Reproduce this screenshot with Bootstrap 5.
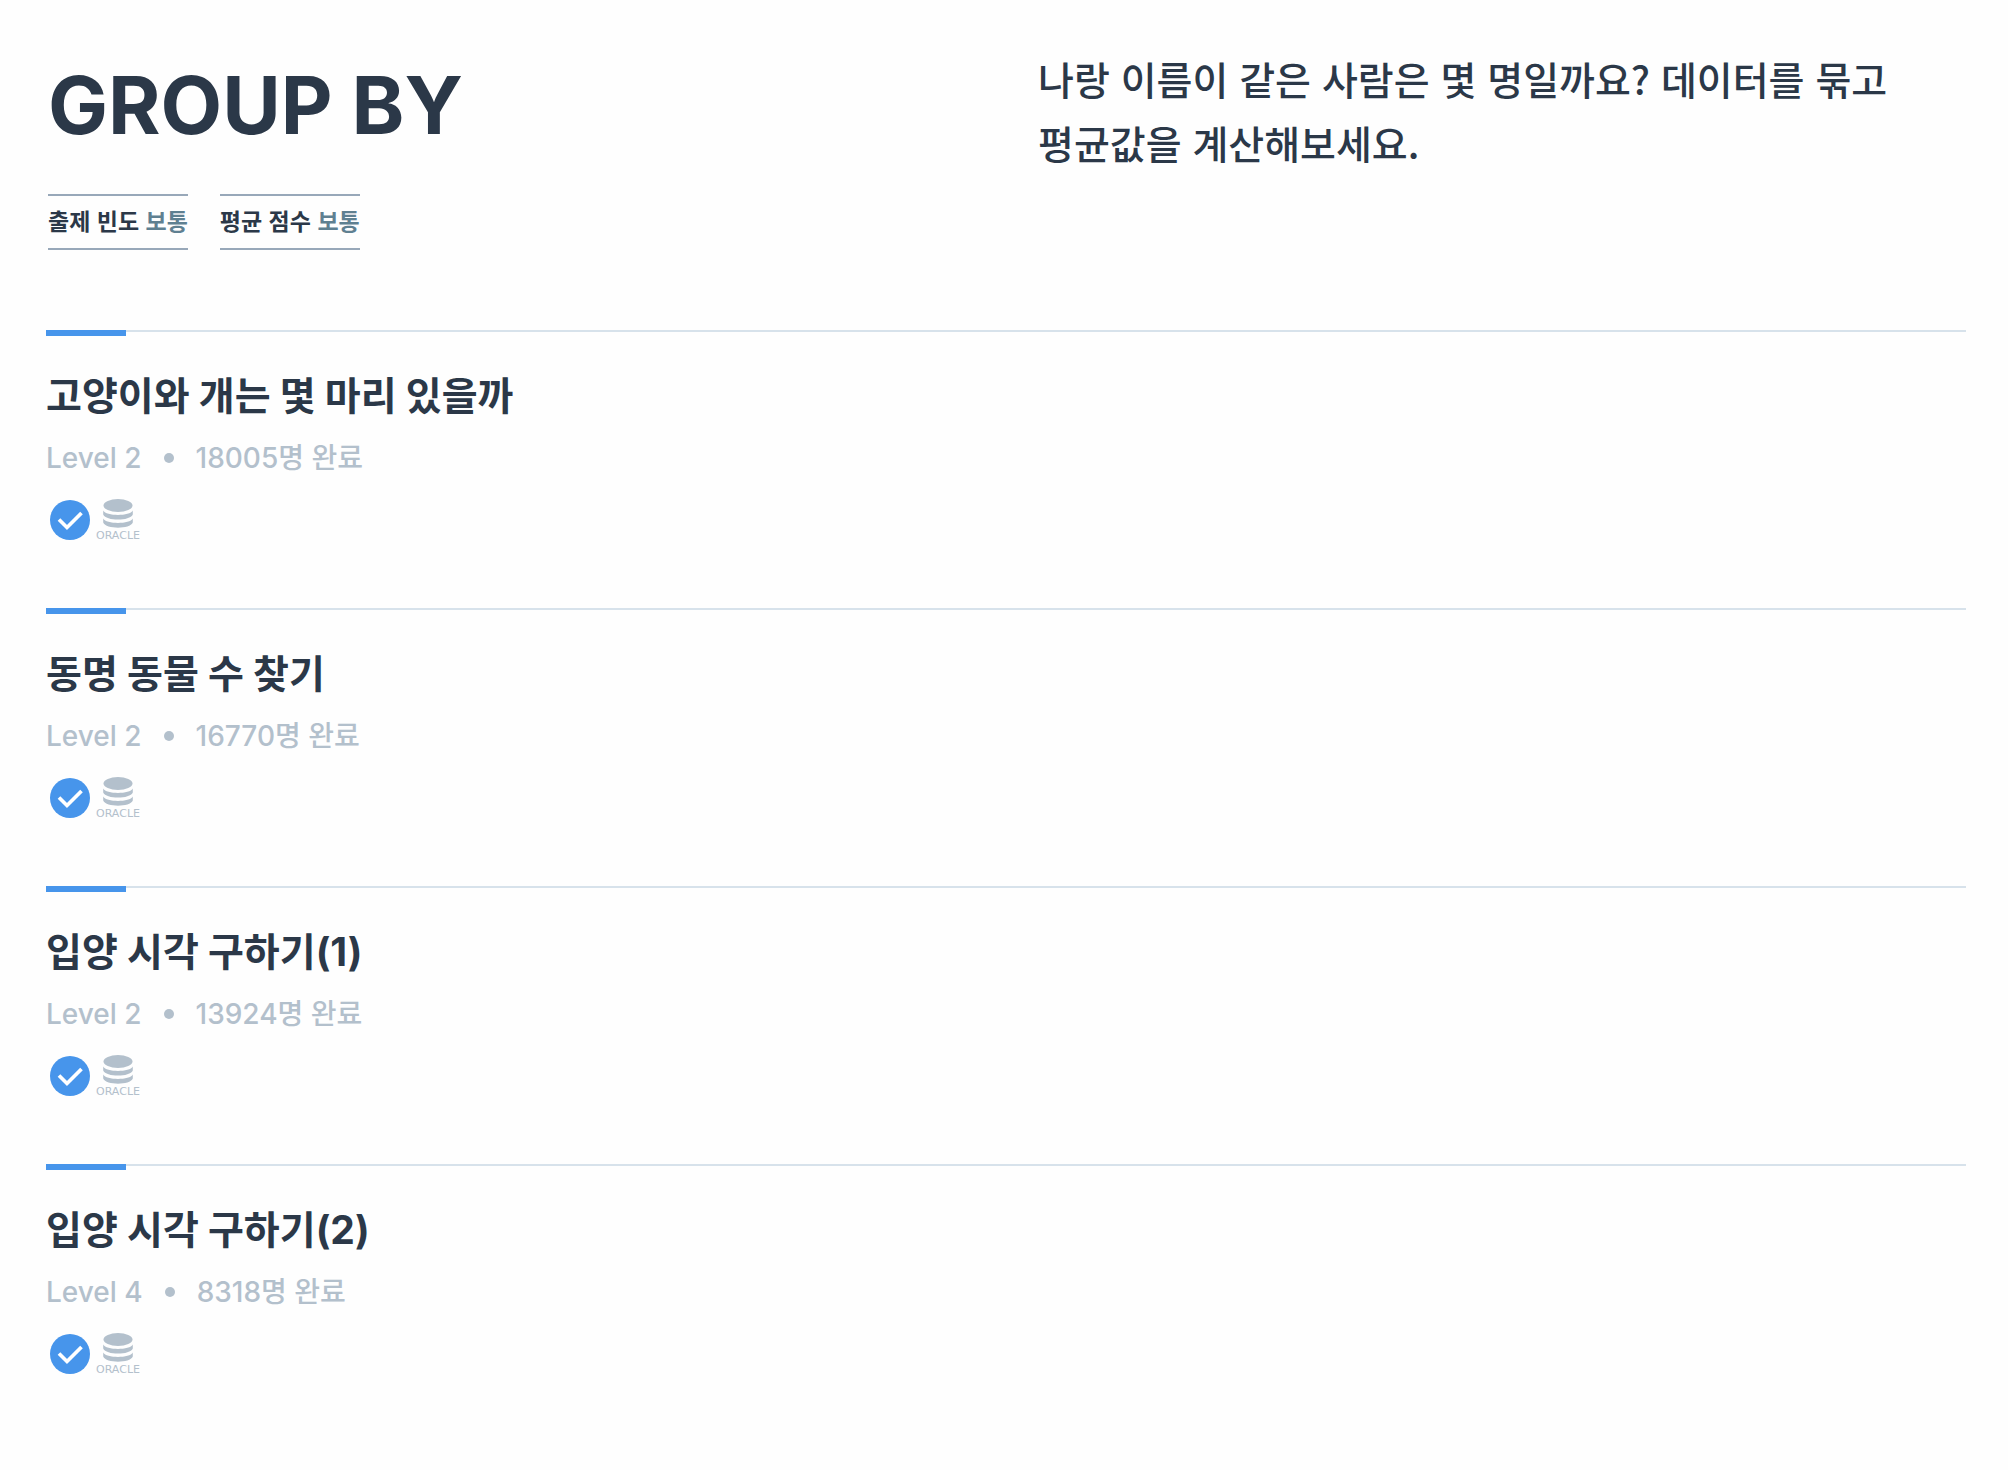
<!DOCTYPE html>
<html lang="ko">
<head>
<meta charset="utf-8">
<meta name="viewport" content="width=device-width, initial-scale=1">
<title>GROUP BY</title>
<link href="https://cdn.jsdelivr.net/npm/bootstrap@5.3.0/dist/css/bootstrap.min.css" rel="stylesheet">
<style>
  body { font-family: Inter, "Noto Sans CJK KR", sans-serif; color: #2b3848; background: #fefefe; word-break: keep-all; }
  .page-wrap { padding: 46px 42px 0 46px; }
  .part-head { margin-left: 2px; margin-right: -2px; --bs-gutter-x: 60px; min-height: 284px; }
  .part-title { font-size: 80px; line-height: 118px; font-weight: 700; margin-bottom: 30px; }
  .part-desc { font-family: "Noto Sans CJK KR", sans-serif; font-size: 39px; line-height: 64px; font-weight: 500; }
  .stat-tags { gap: 32px; }
  .stat-tag { font-family: "Noto Sans CJK KR", sans-serif; font-size: 23px; line-height: 48px; padding-bottom: 4px; font-weight: 700; border-top: 2px solid #98a8b9; border-bottom: 2px solid #98a8b9; }
  .stat-tag span { color: #5f8091; }
  .quiz { border-top: 2px solid #d7e2eb; padding-bottom: 64px; }
  .quiz::before { content: ""; display: block; width: 80px; height: 6px; margin-top: -2px; background: #4795eb; }
  .quiz-title { font-size: 39px; line-height: 56px; font-weight: 700; margin: 32px 0 16px; }
  .quiz-meta { font-size: 28px; line-height: 36px; font-weight: 500; color: #b3c0cc; gap: 22px; margin-bottom: 20px; }
  .dot { width: 10px; height: 10px; background: #b3c0cc; }
  .quiz-icons svg { display: block; width: 48px; height: 48px; }
  .brand-text { font: 11px "DejaVu Sans", sans-serif; }
</style>
</head>
<body>
<svg class="d-none" aria-hidden="true">
  <symbol id="done" viewBox="0 0 48 48">
    <circle cx="24" cy="24" r="20" fill="#4795eb"/>
    <path d="M13 23.500L21 31.500L35.500 17" fill="none" stroke="#fff" stroke-width="3.700"/>
  </symbol>
  <symbol id="oracle" viewBox="0 0 48 48">
    <g fill="#b3c0cc">
      <ellipse cx="24" cy="9.500" rx="14.500" ry="6.500"/>
      <path d="M9.200 14.500C12 20.400 36 20.400 38.800 14.500V18.500C36 25.300 12 25.300 9.200 18.500Z"/>
      <path d="M9.200 22.500C12 28.400 36 28.400 38.800 22.500V26.500C36 33.400 12 33.400 9.200 26.500Z"/>
      <text class="brand-text" x="24" y="43" text-anchor="middle">ORACLE</text>
    </g>
  </symbol>
</svg>
<main class="container-fluid page-wrap">
  <header class="part-head row">
    <div class="col-6 ps-0">
      <h1 class="part-title">GROUP BY</h1>
      <div class="stat-tags d-flex">
        <div class="stat-tag">출제 빈도 <span>보통</span></div>
        <div class="stat-tag">평균 점수 <span>보통</span></div>
      </div>
    </div>
    <div class="col-6 pe-0">
      <p class="part-desc">나랑 이름이 같은 사람은 몇 명일까요? 데이터를 묶고 평균값을 계산해보세요.</p>
    </div>
  </header>
  <ul class="list-unstyled mb-0">
    <li class="quiz">
      <h2 class="quiz-title"><a href="#" class="text-reset text-decoration-none">고양이와 개는 몇 마리 있을까</a></h2>
      <div class="quiz-meta d-flex align-items-center"><span>Level 2</span><span class="dot rounded-circle"></span><span>18005명 완료</span></div>
      <div class="quiz-icons d-flex"><svg role="img" aria-label="완료"><use href="#done"/></svg><svg><use href="#oracle"/></svg></div>
    </li>
    <li class="quiz">
      <h2 class="quiz-title"><a href="#" class="text-reset text-decoration-none">동명 동물 수 찾기</a></h2>
      <div class="quiz-meta d-flex align-items-center"><span>Level 2</span><span class="dot rounded-circle"></span><span>16770명 완료</span></div>
      <div class="quiz-icons d-flex"><svg role="img" aria-label="완료"><use href="#done"/></svg><svg><use href="#oracle"/></svg></div>
    </li>
    <li class="quiz">
      <h2 class="quiz-title"><a href="#" class="text-reset text-decoration-none">입양 시각 구하기(1)</a></h2>
      <div class="quiz-meta d-flex align-items-center"><span>Level 2</span><span class="dot rounded-circle"></span><span>13924명 완료</span></div>
      <div class="quiz-icons d-flex"><svg role="img" aria-label="완료"><use href="#done"/></svg><svg><use href="#oracle"/></svg></div>
    </li>
    <li class="quiz">
      <h2 class="quiz-title"><a href="#" class="text-reset text-decoration-none">입양 시각 구하기(2)</a></h2>
      <div class="quiz-meta d-flex align-items-center"><span>Level 4</span><span class="dot rounded-circle"></span><span>8318명 완료</span></div>
      <div class="quiz-icons d-flex"><svg role="img" aria-label="완료"><use href="#done"/></svg><svg><use href="#oracle"/></svg></div>
    </li>
  </ul>
</main>
<script src="https://cdn.jsdelivr.net/npm/bootstrap@5.3.0/dist/js/bootstrap.bundle.min.js"></script>
</body>
</html>
